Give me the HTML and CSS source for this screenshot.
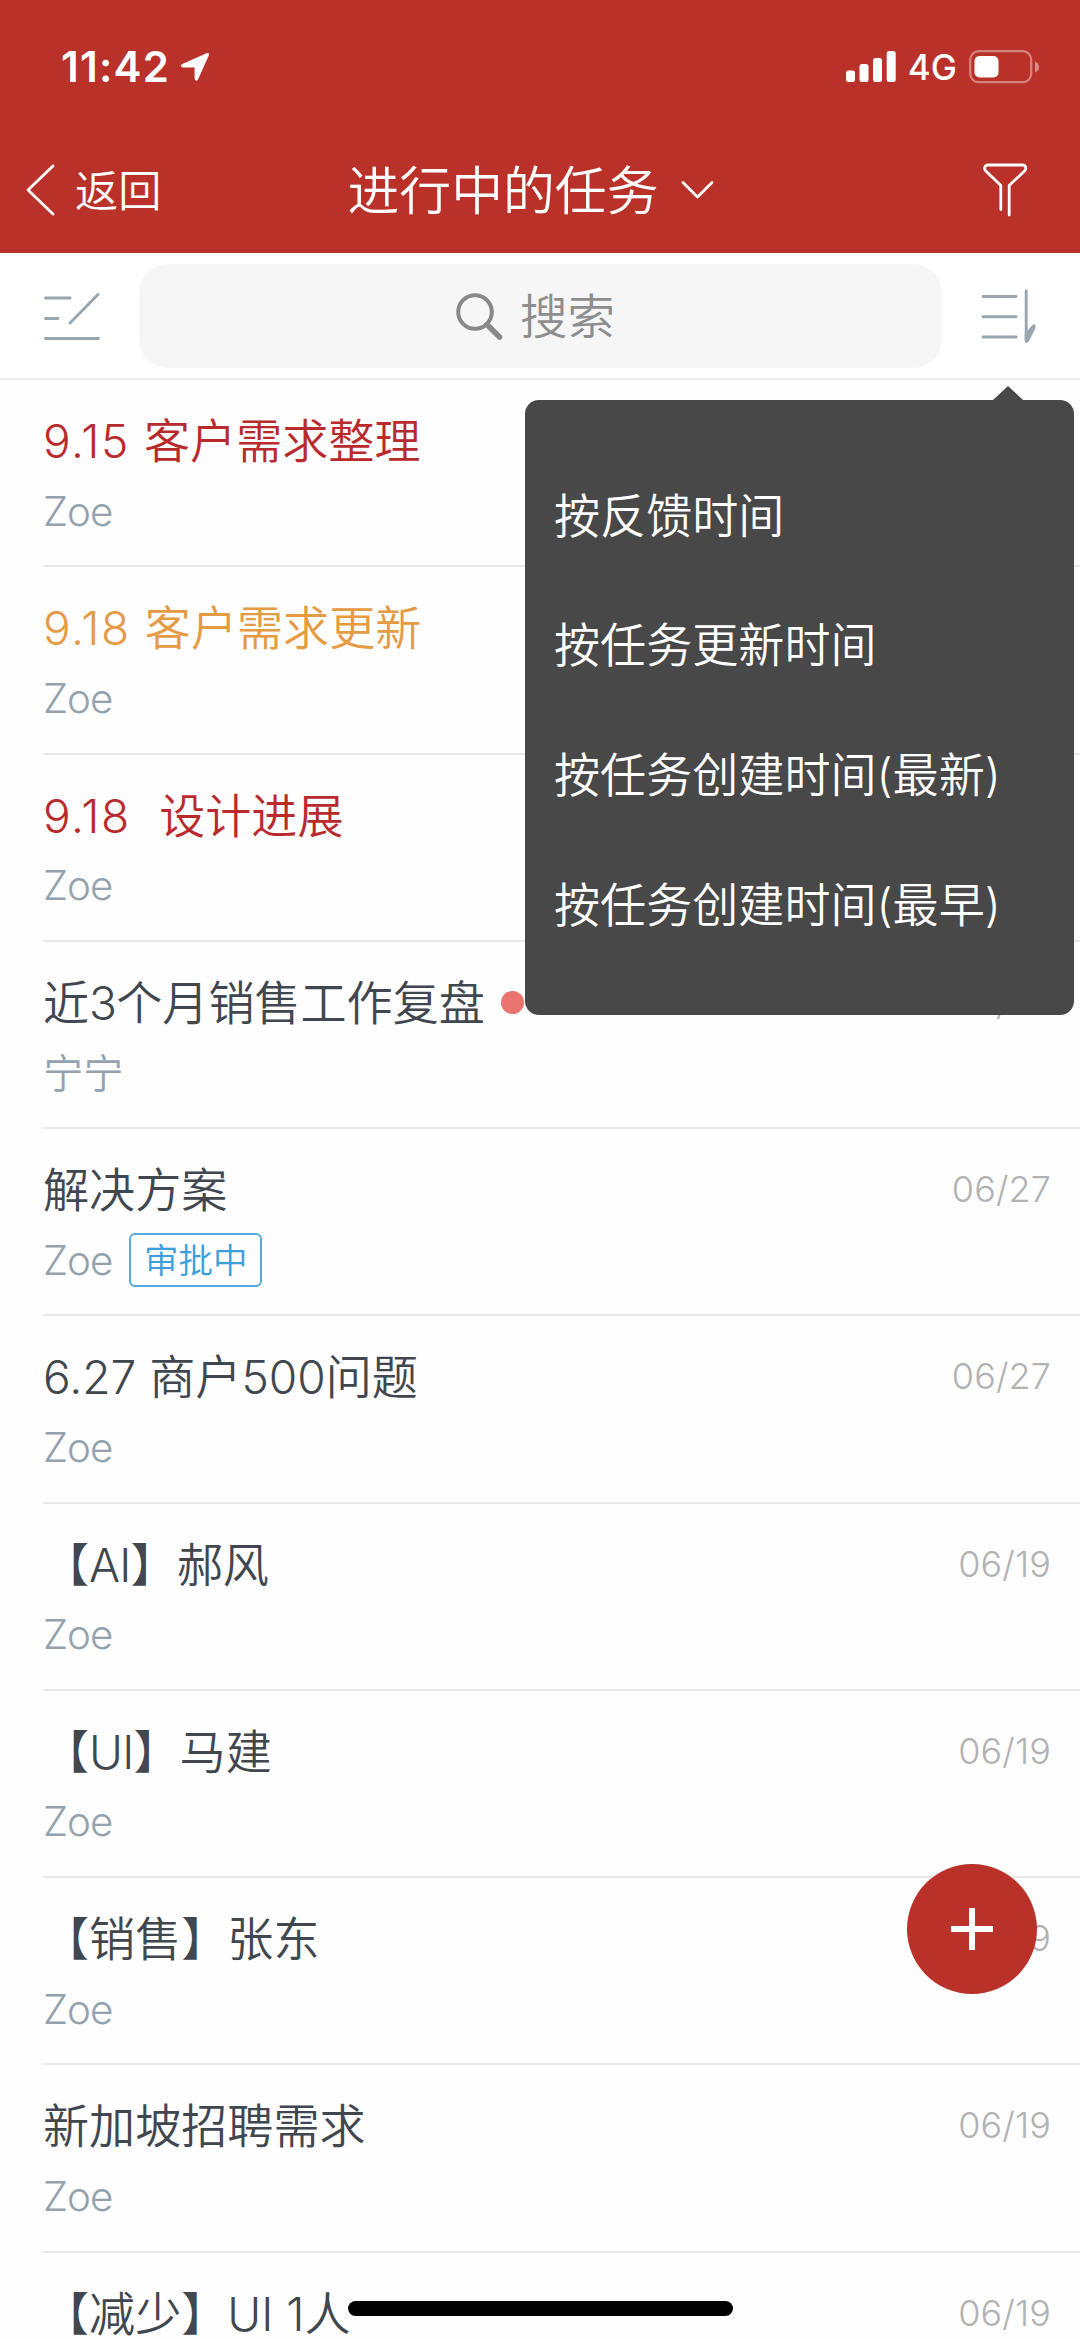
FILE: index.html
```html
<!DOCTYPE html>
<html lang="zh-CN">
<head>
<meta charset="utf-8">
<title>进行中的任务</title>
<link rel="stylesheet" href="styles.css">
</head>
<body>
<div class="screen">
  <header class="header">
    <div class="status">
      <span class="time">11:42</span>
      <svg class="location" width="30" height="30" viewBox="0 0 30 30"><path d="M1.800 12.200 26.500 1.200Q29.600 .3 28.800 3.400L18 27.400Q16 30.400 14.600 27V15.400H3Q-.6 14.400 1.800 12.200Z"/></svg>
      <svg class="signal" width="50" height="31" viewBox="0 0 50 31"><rect x="0" y="19.500" width="9" height="11.500" rx="2.500"/><rect x="13.500" y="13" width="9" height="18" rx="2.500"/><rect x="27" y="7" width="9" height="24" rx="2.500"/><rect x="40.700" y="0" width="9" height="31" rx="2.500"/></svg>
      <span class="network">4G</span>
      <svg class="battery" width="72" height="34" viewBox="0 0 72 34"><rect x="1.200" y="1.200" width="61" height="31" rx="8.500" fill="none" stroke="#fff" stroke-opacity=".4" stroke-width="2.200"/><rect x="5.500" y="6" width="24" height="21.500" rx="5" fill="#fff"/><path d="M66 11.500Q70 13 70 17T66 22.500Z" fill="#fff" fill-opacity=".45"/></svg>
    </div>
    <nav class="nav">
      <a class="back">
        <svg width="30" height="54" viewBox="0 0 30 54"><path d="M28 3 3 27 28 51"/></svg>
        <span>返回</span>
      </a>
      <h1 class="heading"><span>进行中的任务</span>
        <svg width="34" height="20" viewBox="0 0 34 20"><path d="M2 2.500 16.500 17 31 2.500"/></svg>
      </h1>
      <svg class="filter" width="46" height="54" viewBox="0 0 46 54"><path d="M18.800 46.500V22.500L3.800 8C1.500 5.500 3 2 6 2H40.500C43.500 2 45 5.500 42.500 8L27.200 22.500V52"/></svg>
    </nav>
  </header>

  <div class="toolbar">
    <svg class="edit" width="58" height="50" viewBox="0 0 58 50"><path d="M2.500 7H27M2.500 27.500H15M2.500 47.500H55.500M27 32 55 3.500"/></svg>
    <div class="search">
      <svg width="50" height="50" viewBox="0 0 50 50"><circle cx="21" cy="21" r="16.800"/><path class="handle" d="M33 33.500 45.500 46"/></svg>
      <span>搜索</span>
    </div>
    <svg class="sort" width="58" height="58" viewBox="0 0 58 58"><path d="M3 9.500H36M3 29.800H36M3 50H36M46.200 4V53"/><path class="hook" d="M44.700 53V47L51.500 39Q54 36 55.500 38.500V41L49 54Q46 58 44.700 54Z"/></svg>
  </div>

  <main class="list">
    <section class="row"><div class="line red"><span class="title"><b class="date">9.15 </b>客户需求整理</span></div><div class="sub">Zoe</div></section>
    <section class="row"><div class="line orange"><span class="title"><b class="date">9.18 </b>客户需求更新</span></div><div class="sub">Zoe</div></section>
    <section class="row"><div class="line red"><span class="title"><b class="date">9.18  </b>设计进展</span></div><div class="sub">Zoe</div></section>
    <section class="row"><div class="line"><span class="title">近<b class="tight">3</b>个月销售工作复盘</span><i class="dot"></i><time>07/27</time></div><div class="sub"><span class="han">宁宁</span></div></section>
    <section class="row"><div class="line"><span class="title">解决方案</span><time>06/27</time></div><div class="sub"><span>Zoe</span><span class="badge">审批中</span></div></section>
    <section class="row"><div class="line"><span class="title"><b>6.27 </b>商户<b>500</b>问题</span><time>06/27</time></div><div class="sub">Zoe</div></section>
    <section class="row"><div class="line"><span class="title">【<b class="tight">AI</b>】郝风</span><time>06/19</time></div><div class="sub">Zoe</div></section>
    <section class="row"><div class="line"><span class="title">【<b class="tight">UI</b>】马建</span><time>06/19</time></div><div class="sub">Zoe</div></section>
    <section class="row"><div class="line"><span class="title">【销售】张东</span><time>06/19</time></div><div class="sub">Zoe</div></section>
    <section class="row"><div class="line"><span class="title">新加坡招聘需求</span><time>06/19</time></div><div class="sub">Zoe</div></section>
    <section class="row"><div class="line"><span class="title">【减少】<b>UI 1</b>人</span><time>06/19</time></div></section>
  </main>

  <div class="menu">
    <div class="option">按反馈时间</div>
    <div class="option">按任务更新时间</div>
    <div class="option">按任务创建时间(最新)</div>
    <div class="option">按任务创建时间(最早)</div>
  </div>
  <div class="add"><svg width="42" height="42" viewBox="0 0 42 42"><path d="M0 21H42M21 0V42"/></svg></div>
  <div class="home"></div>
</div>
</body>
</html>
```
FILE: styles.css
```css
* { box-sizing: border-box; }
body { margin: 0; background: #fefefe; }
svg { display: block; flex: none; fill: none; }
.screen {
  position: relative;
  width: 1080px;
  height: 2339px;
  overflow: hidden;
  font-family: Inter, "Noto Sans CJK SC", sans-serif;
  font-weight: 350;
  text-spacing-trim: space-all;
}

.header { height: 253px; background: #ba3129; color: #fff; }
.status { display: flex; align-items: center; height: 133px; padding: 0 39px 0 61px; }
.time { font-size: 42px; font-weight: 600; letter-spacing: 1.200px; }
.location { margin-left: 10px; fill: #fff; }
.signal { margin-left: auto; fill: #fff; }
.network { margin-left: 12px; font-size: 35px; font-weight: 450; }
.battery { margin-left: 12px; }

.nav { display: grid; grid-template-columns: 1fr auto 1fr; align-items: center; height: 114px; padding: 0 52px 0 25px; }
.nav path { stroke: #fff; stroke-width: 2.800; stroke-linecap: round; stroke-linejoin: round; }
.back { display: flex; align-items: center; gap: 20px; font-size: 43.200px; }
.back span { padding-bottom: 4px; }
.heading { display: flex; align-items: center; gap: 23px; margin: 0 0 0 10px; font-size: 51.840px; font-weight: 350; }
.heading span { padding-bottom: 5px; }
.filter { justify-self: end; }

.toolbar { display: flex; align-items: center; height: 127px; padding: 0 42px 0 43px; border-bottom: 2px solid #ececed; background: #fff; }
.toolbar svg { stroke: #98a6b0; stroke-width: 2.900; stroke-linecap: round; }
.search { display: flex; align-items: center; justify-content: center; gap: 16px; width: 803px; height: 104px; margin: 0 auto; padding-right: 12px; border-radius: 29px; background: #f6f6f7; color: #8e8e8f; font-size: 47.500px; }
.search span { padding-bottom: 4px; }
.toolbar .search svg { stroke: #88888a; stroke-width: 4; }
.toolbar .search .handle { stroke-width: 5.500; }
.toolbar .hook { fill: #98a6b0; stroke: none; }

.list { padding-left: 43px; }
.row { height: 187.250px; padding-top: 27px; border-bottom: 2px solid #e9e9ea; }
.line { display: flex; align-items: center; height: 68px; padding-right: 29px; color: #41474f; }
.red { color: #b92a2c; }
.orange { color: #e59a44; }
.title { padding-bottom: 6px; font-size: 46.080px; white-space: pre; }
.title b { font-weight: 350; }
.title .date { letter-spacing: 1.400px; }
.title .tight { letter-spacing: -.8px; }
.dot { width: 23px; height: 23px; margin-left: 16px; border-radius: 50%; background: #e8736f; }
time { margin-left: auto; padding-bottom: 2px; color: #b2b2b3; font-size: 36px; font-weight: 330; letter-spacing: .1px; }
.sub { display: flex; align-items: center; height: 66px; margin-top: 3px; color: #94a2ad; font-size: 40.300px; font-weight: 330; letter-spacing: -1px; }
.sub .han { padding-bottom: 4px; font-weight: 350; letter-spacing: 0; }
.badge { display: flex; align-items: center; justify-content: center; width: 133px; height: 54px; margin-left: 17px; padding-bottom: 4px; border: 2px solid #55a9de; border-radius: 6px; color: #3c9fdc; font-size: 34.500px; font-weight: 350; letter-spacing: 0; }

.menu { position: absolute; left: 525px; top: 400px; width: 549px; height: 615px; padding: 48px 29px; border-radius: 14px; background: #484849; color: #fff; font-size: 46.080px; }
.menu::before { content: ""; position: absolute; right: 51px; top: -14px; border: 15px solid transparent; border-top: 0; border-bottom: 14px solid #484849; }
.option { display: flex; align-items: center; height: 129.600px; }
.add { position: absolute; left: 907px; top: 1863.500px; display: grid; place-items: center; width: 130px; height: 130px; border-radius: 50%; background: #ba3129; }
.add path { stroke: #fff; stroke-width: 6; }
.home { position: absolute; left: 348px; top: 2301px; width: 385px; height: 15px; border-radius: 8px; background: #000; }
```
